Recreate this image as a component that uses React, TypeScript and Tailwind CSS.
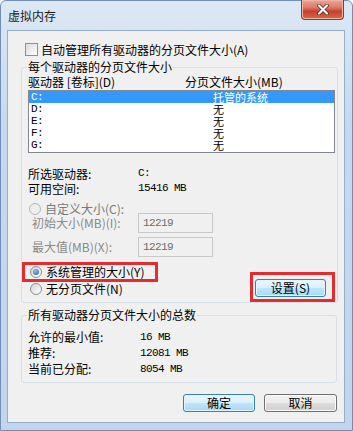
const cjk = "font-['Noto_Sans_CJK_SC',sans-serif]";
const mono = "font-['Liberation_Mono',monospace] text-[11px] tracking-[-0.6px]";

const Radio = ({ checked = false, disabled = false }: { checked?: boolean; disabled?: boolean }) => (
  <span
    className={`flex h-[12px] w-[12px] shrink-0 items-center justify-center rounded-full border ${
      disabled ? "border-[#b5b5b5] bg-[#eeeeee]" : "border-[#8e8f8f] bg-[linear-gradient(135deg,#d4d4d4,#ffffff)]"
    }`}
  >
    {checked && (
      <span className="h-[6px] w-[6px] rounded-full bg-[radial-gradient(circle_at_40%_35%,#8fc3ef,#1d5a9b)]" />
    )}
  </span>
);

const WinButton = ({ label, blue = false, w }: { label: string; blue?: boolean; w: string }) => (
  <button
    className={`${w} flex h-[18px] items-center justify-center rounded-[3px] border text-[12px] leading-[12px] text-black ${
      blue
        ? "border-[#3c7fb1] bg-[linear-gradient(#eaf6fd,#d9f0fc_50%,#bee6fd_50%,#a7d9f5)] shadow-[inset_0_0_0_1px_#e3f4fd]"
        : "border-[#707070] bg-[linear-gradient(#f2f2f2,#ebebeb_50%,#dddddd_50%,#cfcfcf)] shadow-[inset_0_0_0_1px_#fbfbfb]"
    }`}
  >
    {label}
  </button>
);

const drives = [
  { d: "C:", size: "托管的系统", sel: true },
  { d: "D:", size: "无" },
  { d: "E:", size: "无" },
  { d: "F:", size: "无" },
  { d: "G:", size: "无" },
];

export default function App() {
  return (
    <div
      className={`${cjk} flex h-[431px] w-[353px] flex-col rounded-t-[6px] border border-[#6f8fb8] bg-[linear-gradient(#dce8f5,#c6d8ed_30%,#c2d5ec)] pb-[7px] pl-[6px] pr-[7px] text-[12px] text-black`}
    >
      {/* title bar */}
      <div className="flex h-[29px] shrink-0 items-center justify-between">
        <span className="pl-[1px] text-[12px] leading-[14px] text-[#1b1b1b]">虚拟内存</span>
        <div className="-mt-px mr-[1px] flex h-[20px] w-[43px] items-center justify-center self-start rounded-b-[4px] border border-t-0 border-[#8c3a2c] bg-[linear-gradient(#eaa99b,#dd7766_40%,#c4412b_60%,#d9694b)] shadow-[inset_0_0_0_1px_#f0b4a6]">
          <svg width="12" height="11" viewBox="0 0 12 11">
            <path d="M2 1.5 L10 9.5 M10 1.5 L2 9.5" stroke="#5a2218" strokeWidth="3.6" strokeLinecap="round" />
            <path d="M2 1.5 L10 9.5 M10 1.5 L2 9.5" stroke="#ffffff" strokeWidth="2.2" strokeLinecap="round" />
          </svg>
        </div>
      </div>

      {/* client area */}
      <div className="flex flex-1 flex-col border border-[#98afcc] bg-[#f0f0f0]">
        <div className="mt-[12px] flex h-[13px] items-center gap-[3px] pl-[17px] leading-[13px]">
          <span className="h-[13px] w-[13px] shrink-0 border border-[#8e8f8f] bg-[linear-gradient(135deg,#dcdcdc,#ffffff)]" />
          <span>自动管理所有驱动器的分页文件大小(A)</span>
        </div>

        {/* group 1 */}
        <fieldset className="ml-[13px] mr-[6px] mt-[4px] rounded-[3px] border border-[#d5dfe5]">
          <legend className="ml-[5px] px-[1px] leading-[14px]">每个驱动器的分页文件大小</legend>
          <div className="flex flex-col pl-[6px] pr-[2px]">
            <div className="mt-[1px] flex h-[14px] leading-[14px]">
              <span className="w-[157px]">驱动器 [卷标](D)</span>
              <span>分页文件大小(MB)</span>
            </div>
            <div className="mt-[1px] h-[63px] border border-[#828790] bg-white">
              {drives.map((r) => (
                <div
                  key={r.d}
                  className={`flex h-[12px] items-center pl-[2px] text-[11px] leading-[12px] ${
                    r.sel ? "bg-[#3399ff] text-white" : "text-black"
                  }`}
                >
                  <span className={`${mono} w-[182px]`}>{r.d}</span>
                  <span className="leading-[11px]">{r.size}</span>
                </div>
              ))}
            </div>

            <div className="mt-[13px] flex h-[15px] items-center">
              <span className="w-[110px]">所选驱动器:</span>
              <span className={mono}>C:</span>
            </div>
            <div className="flex h-[15px] items-center">
              <span className="w-[110px]">可用空间:</span>
              <span className={mono}>15416 MB</span>
            </div>

            <div className="mt-[8px] flex h-[9px] items-center gap-[4px] pl-[1px] text-[#7a7a7a]">
              <Radio disabled />
              <span>自定义大小(C):</span>
            </div>
            <div className="flex h-[20px] items-center">
              <span className="w-[110px] pl-[4px] text-[#8a8a8a]">初始大小(MB)(I):</span>
              <div className={`${mono} flex h-[20px] w-[75px] items-center border border-[#c9c9c9] pl-[4px] text-[#6d6d6d]`}>
                12219
              </div>
            </div>
            <div className="mt-[4px] flex h-[20px] items-center">
              <span className="w-[110px] pl-[4px] text-[#8a8a8a]">最大值(MB)(X):</span>
              <div className={`${mono} flex h-[20px] w-[75px] items-center border border-[#c9c9c9] pl-[4px] text-[#6d6d6d]`}>
                12219
              </div>
            </div>

            <div className="mt-[5px] flex">
              <div className="-ml-[6px] flex flex-col">
                <div className="flex h-[20px] w-[136px] items-center gap-[4px] border-[3px] border-[#e42b2f] pl-[5px]">
                  <Radio checked />
                  <span>系统管理的大小(Y)</span>
                </div>
                <div className="mt-[1px] flex h-[12px] items-center gap-[4px] pl-[8px]">
                  <Radio />
                  <span>无分页文件(N)</span>
                </div>
              </div>
              <div className="ml-auto mt-[10px] h-[30px] w-[85px] border-[3px] border-[#e42b2f] pl-[2px] pt-[4px]">
                <WinButton label="设置(S)" blue w="w-[71px]" />
              </div>
            </div>
          </div>
        </fieldset>

        {/* group 2 */}
        <fieldset className="ml-[13px] mr-[7px] mt-[5px] rounded-[3px] border border-[#d5dfe5] pb-[5px]">
          <legend className="ml-[5px] px-[1px] leading-[14px]">所有驱动器分页文件大小的总数</legend>
          <div className="mt-[7px] flex flex-col pl-[6px]">
            {[
              ["允许的最小值:", "16 MB"],
              ["推荐:", "12081 MB"],
              ["当前已分配:", "8054 MB"],
            ].map(([k, v]) => (
              <div key={k} className="flex h-[16px] items-center">
                <span className="w-[112px]">{k}</span>
                <span className={mono}>{v}</span>
              </div>
            ))}
          </div>
        </fieldset>

        <div className="mr-[7px] mt-[11px] flex justify-end gap-[9px]">
          <WinButton label="确定" blue w="w-[72px]" />
          <WinButton label="取消" w="w-[73px]" />
        </div>
      </div>
    </div>
  );
}
